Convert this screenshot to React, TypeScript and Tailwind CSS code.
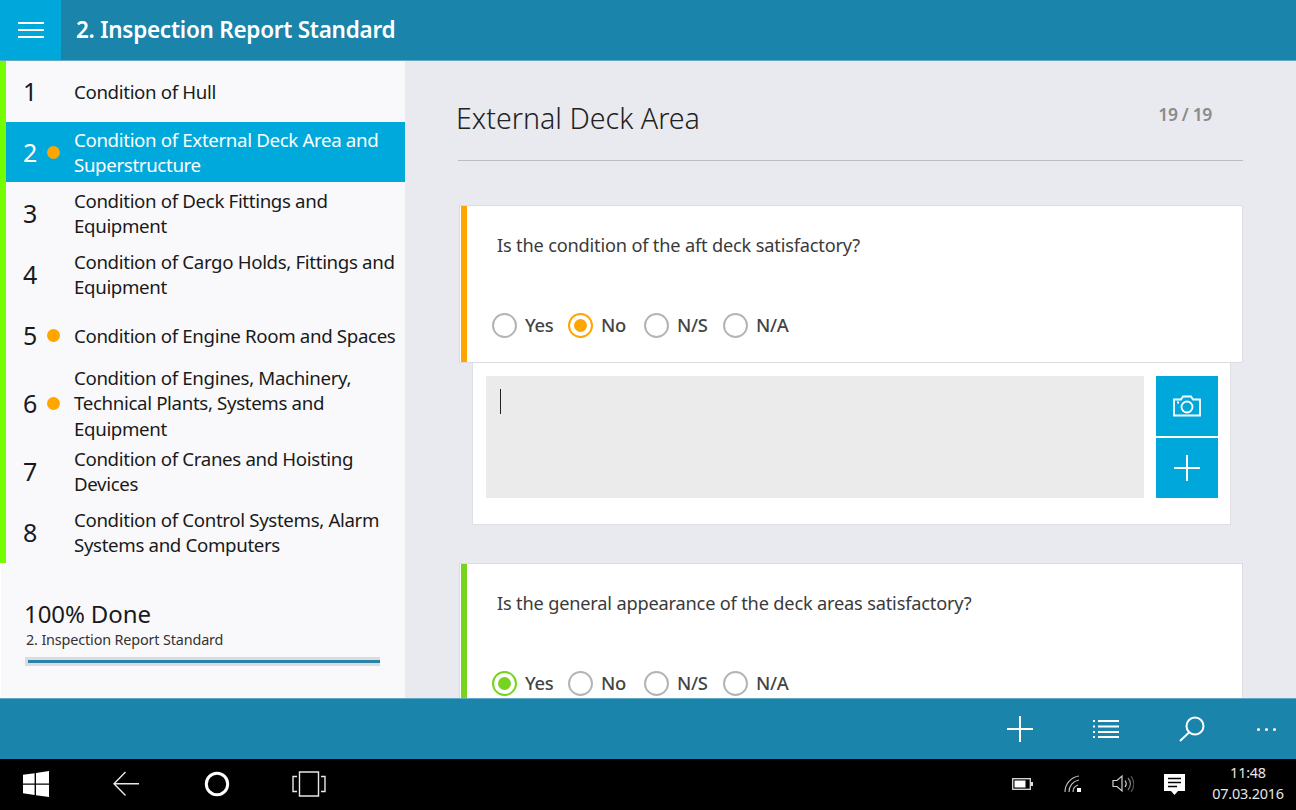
import React from "react";

const items: { n: string; t: string[]; h: string; dot?: boolean; sel?: boolean }[] = [
  { n: "1", t: ["Condition of Hull"], h: "h-[60px]" },
  { n: "2", t: ["Condition of External Deck Area and", "Superstructure"], h: "h-[60px]", dot: true, sel: true },
  { n: "3", t: ["Condition of Deck Fittings and", "Equipment"], h: "h-[60px]" },
  { n: "4", t: ["Condition of Cargo Holds, Fittings and", "Equipment"], h: "h-[60px]" },
  { n: "5", t: ["Condition of Engine Room and Spaces"], h: "h-[60px]", dot: true },
  { n: "6", t: ["Condition of Engines, Machinery,", "Technical Plants, Systems and", "Equipment"], h: "h-[74px]", dot: true },
  { n: "7", t: ["Condition of Cranes and Hoisting", "Devices"], h: "h-[60px]" },
  { n: "8", t: ["Condition of Control Systems, Alarm", "Systems and Computers"], h: "h-[60px]" },
];

function Row({ it }: { it: (typeof items)[number] }) {
  return (
    <div className={`${it.h} flex items-center ${it.sel ? "bg-[#00a9db] text-white" : "text-[#1a1a1a]"}`}>
      <div className="w-[14px] ml-[17px] shrink-0 text-[25px] leading-none text-center">{it.n}</div>
      <div className="w-[37px] shrink-0 flex justify-start pl-[10px]">
        {it.dot ? <div className="w-[13px] h-[13px] rounded-full bg-[#ffa500]" /> : null}
      </div>
      <div className={`text-[18.7px] leading-[25.3px] whitespace-nowrap tracking-[-0.35px] ${it.t.length === 1 ? "pt-[2px]" : ""}`}>
        {it.t.map((l) => (
          <div key={l}>{l}</div>
        ))}
      </div>
    </div>
  );
}

function Radio({ label, on, color, w }: { label: string; on?: boolean; color?: string; w: string }) {
  return (
    <div className={`${w} shrink-0 flex items-center`}>
      <div className={`w-[25px] h-[25px] shrink-0 rounded-full border-[2.5px] flex items-center justify-center ${on ? color : "border-[#b4b4b4]"}`}>
        {on ? <div className={`w-[13px] h-[13px] rounded-full ${color === "border-[#ffa500]" ? "bg-[#ffa500]" : "bg-[#76d41e]"}`} /> : null}
      </div>
      <div className="ml-[8px] text-[18.4px] font-medium text-[#444] leading-none tracking-[-0.3px]">{label}</div>
    </div>
  );
}

function Question({ q, bar, on, color }: { q: string; bar: string; on: string; color: string }) {
  const labels: [string, string][] = [["Yes", "w-[76px]"], ["No", "w-[76px]"], ["N/S", "w-[79px]"], ["N/A", "w-[70px]"]];
  return (
    <div className="h-[158px] shrink-0 bg-white border border-[#dcdce0] pl-[1px] py-0 flex">
      <div className={`w-[6px] ${bar}`} />
      <div className="flex-1 flex flex-col pl-[25px]">
        <div className="pl-[5px] pt-[25px] text-[18.2px] leading-[28px] text-[#3a3a3a] tracking-[-0.18px]">{q}</div>
        <div className="mt-[54px] flex">
          {labels.map(([l, w]) => (
            <Radio key={l} label={l} w={w} on={l === on} color={color} />
          ))}
        </div>
      </div>
    </div>
  );
}

function PlusIcon({ size }: { size: number }) {
  return (
    <svg width={size} height={size} viewBox="0 0 26 26" stroke="white" strokeWidth="2" fill="none">
      <path d="M13 0V26M0 13H26" />
    </svg>
  );
}

export default function App() {
  return (
    <div className="w-[1296px] h-[810px] flex flex-col overflow-hidden bg-black font-['Noto_Sans',sans-serif]">
      {/* top bar */}
      <div className="h-[61px] shrink-0 flex bg-[#1b84ab] border-b border-[#5fa9c6]">
        <div className="w-[61px] bg-[#00a7db] flex items-center justify-center">
          <svg width="26" height="18" viewBox="0 0 26 18" stroke="white" strokeWidth="2">
            <path d="M0 2H26M0 9H26M0 16H26" />
          </svg>
        </div>
        <div className="ml-[15px] flex items-center text-white text-[22.5px] font-semibold tracking-[-0.26px]">2. Inspection Report Standard</div>
      </div>

      {/* middle */}
      <div className="h-[637px] shrink-0 flex bg-[#e9eaef] overflow-hidden">
        {/* sidebar */}
        <div className="w-[405px] shrink-0 bg-[#f9f9fb] flex flex-col">
          <div className="flex flex-col gap-[1px] border-l-[6px] border-[#74fd00] h-[502px]">
            {items.map((it) => (
              <Row key={it.n} it={it} />
            ))}
          </div>
          <div className="flex-1 border-l border-white pl-[23px] pt-[35px]">
            <div className="text-[24px] leading-[32px] text-[#1a1a1a] tracking-[-0.1px]">100% Done</div>
            <div className="pl-[2px] text-[14.4px] leading-[20px] text-[#333] tracking-[-0.15px]">2. Inspection Report Standard</div>
            <div className="mt-[7px] ml-[1px] w-[355px] h-[9px] bg-[#dcdcde] pl-[3px] py-[3px]">
              <div className="h-full bg-[#2a83aa]" />
            </div>
          </div>
        </div>

        {/* main */}
        <div className="flex-1 flex flex-col pl-[53px] pr-[53px] min-w-0">
          <div className="h-[100px] shrink-0 border-b border-[#bcbcc2] flex items-start justify-between">
            <div className="pt-[35px] -ml-[2px] text-[28.6px] leading-[44px] font-light text-[#222]">External Deck Area</div>
            <div className="pt-[40px] pr-[31px] text-[17.5px] leading-[26px] font-semibold text-[#8b8b8b] tracking-[-0.35px]">19 / 19</div>
          </div>
          <div className="pl-[1px] pt-[44px] flex flex-col">
            <Question q="Is the condition of the aft deck satisfactory?" bar="bg-[#ffa500]" on="No" color="border-[#ffa500]" />
            <div className="ml-[13px] mr-[12px] h-[162px] shrink-0 bg-white border-x border-b border-[#e0e0e4] flex pl-[13px] pr-[12px] pt-[13px]">
              <div className="w-[658px] h-[122px] bg-[#ebebeb] pl-[14px] pt-[13px]">
                <div className="w-[1px] h-[25px] bg-[#222]" />
              </div>
              <div className="ml-[12px] w-[62px] flex flex-col gap-[2px]">
                <div className="h-[60px] bg-[#00a7db] flex items-center justify-center">
                  <svg width="28" height="22" viewBox="0 0 28 22" fill="none" stroke="white" strokeWidth="1.8">
                    <path d="M1 4.5H8L10 1.5H18L20 4.5H27V20.5H1Z" />
                    <circle cx="14" cy="12" r="5.5" />
                    <path d="M4 7.5H6" />
                  </svg>
                </div>
                <div className="h-[60px] bg-[#00a7db] flex items-center justify-center">
                  <PlusIcon size={26} />
                </div>
              </div>
            </div>
            <div className="mt-[38px]">
              <Question q="Is the general appearance of the deck areas satisfactory?" bar="bg-[#76d41e]" on="Yes" color="border-[#76d41e]" />
            </div>
          </div>
        </div>
      </div>

      {/* app bar */}
      <div className="h-[61px] shrink-0 bg-[#1b84ab] border-t border-[#5fa9c6] flex items-center justify-end text-white">
        <div className="flex items-center">
          <PlusIcon size={26} />
          <svg className="ml-[60px]" width="26" height="20" viewBox="0 0 26 20" stroke="white" strokeWidth="2" fill="none">
            <path d="M0 2H2M0 7.5H2M0 13H2M0 18H2M5 2H26M5 7.5H26M5 13H26M5 18H26" />
          </svg>
          <svg className="ml-[60px]" width="26" height="26" viewBox="0 0 26 26" stroke="white" strokeWidth="2" fill="none">
            <circle cx="16" cy="10" r="8.5" />
            <path d="M10 16.5L1 25" />
          </svg>
          <div className="ml-[52px] mr-[20px] flex gap-[5px]">
            <div className="w-[3px] h-[3px] bg-white rounded-full" />
            <div className="w-[3px] h-[3px] bg-white rounded-full" />
            <div className="w-[3px] h-[3px] bg-white rounded-full" />
          </div>
        </div>
      </div>

      {/* taskbar */}
      <div className="h-[50px] shrink-0 bg-black flex items-center text-[#e6e6e6]">
        <svg className="ml-[23px]" width="26" height="26" viewBox="0 0 26 26" fill="white">
          <path d="M0 3.8L11.6 2.2V12.4H0ZM13 2L26 0V12.4H13ZM0 13.7H11.6V23.9L0 22.3ZM13 13.7H26V26L13 24.2Z" />
        </svg>
        <svg className="ml-[64px]" width="26" height="26" viewBox="0 0 26 26" fill="none" stroke="#e8e8e8" strokeWidth="1.4">
          <path d="M12.5 1L1 12.7L12.5 24.5M1 12.7H26" />
        </svg>
        <svg className="ml-[65px]" width="26" height="26" viewBox="0 0 26 26" fill="none" stroke="white" strokeWidth="3">
          <circle cx="13" cy="13" r="10.7" />
        </svg>
        <svg className="ml-[62px]" width="34" height="26" viewBox="0 0 34 26" fill="none" stroke="#e8e8e8" strokeWidth="1.4">
          <path d="M5 5.5H1V20.5H5M29 5.5H33V20.5H29M7.5 1H26.5V25H7.5Z" />
        </svg>
        <div className="flex-1" />
        <svg width="21" height="12" viewBox="0 0 21 12">
          <rect x="0.7" y="0.7" width="17.6" height="10.6" fill="none" stroke="#e0e0e0" strokeWidth="1.3" />
          <rect x="2.5" y="2.5" width="11" height="7" fill="white" />
          <rect x="19" y="4" width="2" height="4" fill="#e0e0e0" />
        </svg>
        <svg className="ml-[31px]" width="18" height="18" viewBox="0 0 18 18" fill="none" stroke="#bdbdbd" strokeWidth="1.2">
          <path d="M1 17C1 9 7 2 15 1M5 17C5 11 9 6 15 5M9 17C9 14 11 11 14 10" />
          <rect x="13" y="13" width="4" height="4" fill="white" stroke="none" />
        </svg>
        <svg className="ml-[30px]" width="22" height="20" viewBox="0 0 22 20" fill="none" stroke="#d0d0d0" strokeWidth="1.2">
          <path d="M1 6.5H5L10 2V17L5 12.5H1Z" />
          <path d="M13 6.5C14.5 8.5 14.5 11 13 13" />
          <path d="M16 4C19 7.5 19 12 16 16" stroke="#888" />
          <path d="M19 2C22.5 7 22.5 13 19 18" stroke="#555" />
        </svg>
        <svg className="ml-[30px]" width="21" height="21" viewBox="0 0 21 21">
          <path d="M0 0H21V17H14L10.5 21L7 17H0Z" fill="white" />
          <path d="M4 4.5H17M4 8.5H17M4 12.5H13" stroke="black" strokeWidth="1.3" />
        </svg>
        <div className="ml-[27px] w-[72px] mr-[12px] flex flex-col items-center text-[14.4px] leading-[20.5px] tracking-[-0.2px] -mt-[1px]">
          <div>11:48</div>
          <div>07.03.2016</div>
        </div>
      </div>
    </div>
  );
}
